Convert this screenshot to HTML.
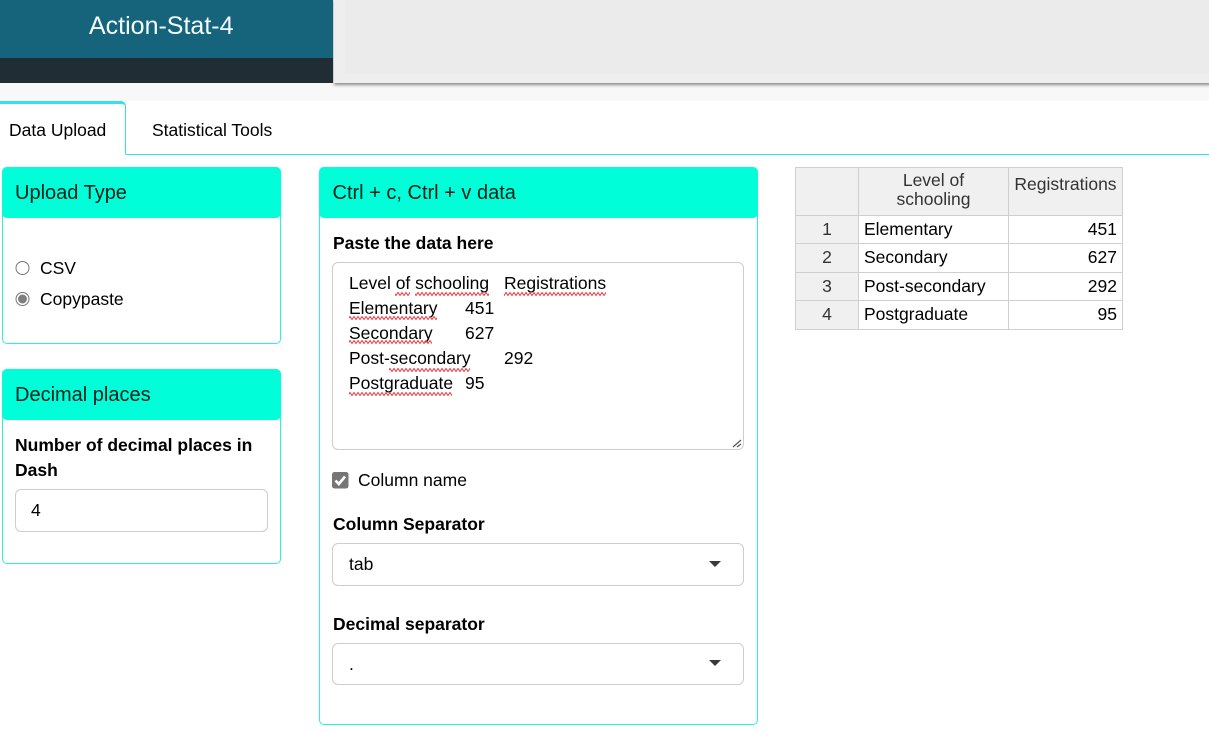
<!DOCTYPE html>
<html><head><meta charset="utf-8">
<style>
html,body{margin:0;padding:0;width:1209px;height:732px;overflow:hidden;background:#fff;font-family:"Liberation Sans",sans-serif;color:#000}
.a{position:absolute;white-space:pre;line-height:20px;font-size:17.5px}
.b{font-weight:700}
.card{position:absolute;box-sizing:border-box;border:1px solid #2cf2d6;border-radius:5px;background:#fff}
.hd{position:absolute;background:#00ffd8;border-radius:5px;height:51px}
.h{position:absolute;font-size:20px;line-height:24px;white-space:pre;color:#06201c}
.inp{position:absolute;box-sizing:border-box;border:1px solid #cdcdcd;border-radius:6px;background:#fff}
.arr{position:absolute;width:0;height:0;border-left:6.5px solid transparent;border-right:6.5px solid transparent;border-top:6.5px solid #3a3a3a}
table{position:absolute;left:795px;top:167px;border-collapse:collapse;table-layout:fixed;font-size:17.5px;line-height:19px;width:328px}
td,th{border:1px solid #cfcfcf;padding:0 5px;font-weight:400;overflow:hidden}
.g{background:#f0f0f0;color:#333}
.u td{padding-bottom:2px}
</style></head><body>
<div style="position:absolute;left:0;top:0;width:1209px;height:101px;background:#f8f8f8"></div>
<div style="position:absolute;left:334px;top:0;width:875px;height:83px;background:#eeeeee;box-shadow:1px 1px 3px 1px #8a8a8a"></div>
<div style="position:absolute;left:345px;top:0;width:864px;height:74px;background:#ebebeb"></div>
<div style="position:absolute;left:0;top:0;width:333px;height:58px;background:#16647c"></div>
<div style="position:absolute;left:0;top:58px;width:333px;height:25px;background:#212d34"></div>
<div class="a" style="left:89px;top:12px;font-size:25px;line-height:28px;color:#f4fbfd">Action-Stat-4</div>

<div style="position:absolute;left:0;top:154px;width:1209px;height:1px;background:#35dfee"></div>
<div style="position:absolute;left:-6px;top:101px;width:132px;height:54px;box-sizing:border-box;border:1px solid #35dfee;border-top:3px solid #35dfee;border-bottom:1px solid #fff;border-radius:5px 5px 0 0;background:#fff"></div>
<div class="a" style="left:9px;top:120px">Data Upload</div>
<div class="a" style="left:152px;top:120px">Statistical Tools</div>

<div class="card" style="left:2px;top:167px;width:279px;height:177px"></div>
<div class="hd" style="left:2px;top:167px;width:279px"></div>
<div class="h" style="left:15px;top:181px">Upload Type</div>
<svg style="position:absolute;left:14px;top:259px" width="18" height="50">
<circle cx="8.500" cy="9" r="6.500" fill="#fff" stroke="#767676" stroke-width="1"/>
<circle cx="8.500" cy="40" r="6.500" fill="#fff" stroke="#767676" stroke-width="1"/>
<circle cx="8.500" cy="40" r="4.500" fill="#7f7f7f"/>
</svg>
<div class="a" style="left:40px;top:258px">CSV</div>
<div class="a" style="left:40px;top:289px">Copypaste</div>

<div class="card" style="left:2px;top:369px;width:279px;height:195px"></div>
<div class="hd" style="left:2px;top:369px;width:279px"></div>
<div class="h" style="left:15px;top:383px">Decimal places</div>
<div class="a b" style="left:15px;top:435px">Number of decimal places in</div>
<div class="a b" style="left:15px;top:460px">Dash</div>
<div class="inp" style="left:15px;top:489px;width:253px;height:43px"></div>
<div class="a" style="left:31px;top:500px">4</div>

<div class="card" style="left:319px;top:167px;width:439px;height:558px"></div>
<div class="hd" style="left:319px;top:167px;width:439px"></div>
<div class="h" style="left:332.500px;top:181px">Ctrl + c, Ctrl + v data</div>
<div class="a b" style="left:333px;top:233px">Paste the data here</div>
<div class="inp" style="left:332px;top:262px;width:412px;height:188px"></div>
<div class="a" style="left:349px;top:273px">Level of schooling</div>
<div class="a" style="left:504px;top:273px">Registrations</div>
<div class="a" style="left:349px;top:298px">Elementary</div>
<div class="a" style="left:465px;top:298px">451</div>
<div class="a" style="left:349px;top:323px">Secondary</div>
<div class="a" style="left:465px;top:323px">627</div>
<div class="a" style="left:349px;top:348px">Post-secondary</div>
<div class="a" style="left:504px;top:348px">292</div>
<div class="a" style="left:349px;top:373px">Postgraduate</div>
<div class="a" style="left:465px;top:373px">95</div>
<svg style="position:absolute;left:0;top:0" width="1209" height="732">
<defs><pattern id="w" width="4" height="4" patternUnits="userSpaceOnUse"><path d="M0 3.500L2 .5L4 3.500" fill="none" stroke="#f0353a" stroke-width="1" stroke-linecap="square"/></pattern></defs>
<rect x="395" y="292" width="15" height="4" fill="url(#w)"/>
<rect x="415" y="292" width="74" height="4" fill="url(#w)"/>
<rect x="504" y="292" width="102" height="4" fill="url(#w)"/>
<rect x="349" y="316" width="88" height="4" fill="url(#w)"/>
<rect x="349" y="340" width="83" height="4" fill="url(#w)"/>
<rect x="389" y="368" width="81" height="4" fill="url(#w)"/>
<rect x="349" y="392" width="103" height="4" fill="url(#w)"/>
<path d="M733 447L741 440M737 447L741 444" stroke="#555" stroke-width="1.200" fill="none"/>
</svg>

<svg style="position:absolute;left:332px;top:472px" width="17" height="17">
<rect x="0" y="0" width="16.500" height="16.500" rx="2.500" fill="#767676"/>
<path d="M3.500 8.500L6.800 12L13 4.500" fill="none" stroke="#fff" stroke-width="2.600"/>
</svg>
<div class="a" style="left:358px;top:470px">Column name</div>

<div class="a b" style="left:333px;top:514px">Column Separator</div>
<div class="inp" style="left:332px;top:543px;width:412px;height:43px"></div>
<div class="a" style="left:349px;top:554px">tab</div>
<div class="arr" style="left:709px;top:561px"></div>

<div class="a b" style="left:333px;top:614px">Decimal separator</div>
<div class="inp" style="left:332px;top:643px;width:412px;height:42px"></div>
<div class="a" style="left:349px;top:654px">.</div>
<div class="arr" style="left:709px;top:660px"></div>

<table>
<colgroup><col style="width:63px"><col style="width:150px"><col style="width:114px"></colgroup>
<tr style="height:48px"><th class="g"></th><th class="g" style="vertical-align:top;padding-top:3px">Level of<br>schooling</th><th class="g" style="vertical-align:top;padding-top:7px;white-space:nowrap;text-align:center">Registrations</th></tr>
<tr style="height:28px"><td class="g" style="text-align:center">1</td><td>Elementary</td><td style="text-align:right">451</td></tr>
<tr class="u" style="height:29px"><td class="g" style="text-align:center">2</td><td>Secondary</td><td style="text-align:right">627</td></tr>
<tr style="height:28px"><td class="g" style="text-align:center">3</td><td>Post-secondary</td><td style="text-align:right">292</td></tr>
<tr class="u" style="height:29px"><td class="g" style="text-align:center">4</td><td>Postgraduate</td><td style="text-align:right">95</td></tr>
</table>
</body></html>
